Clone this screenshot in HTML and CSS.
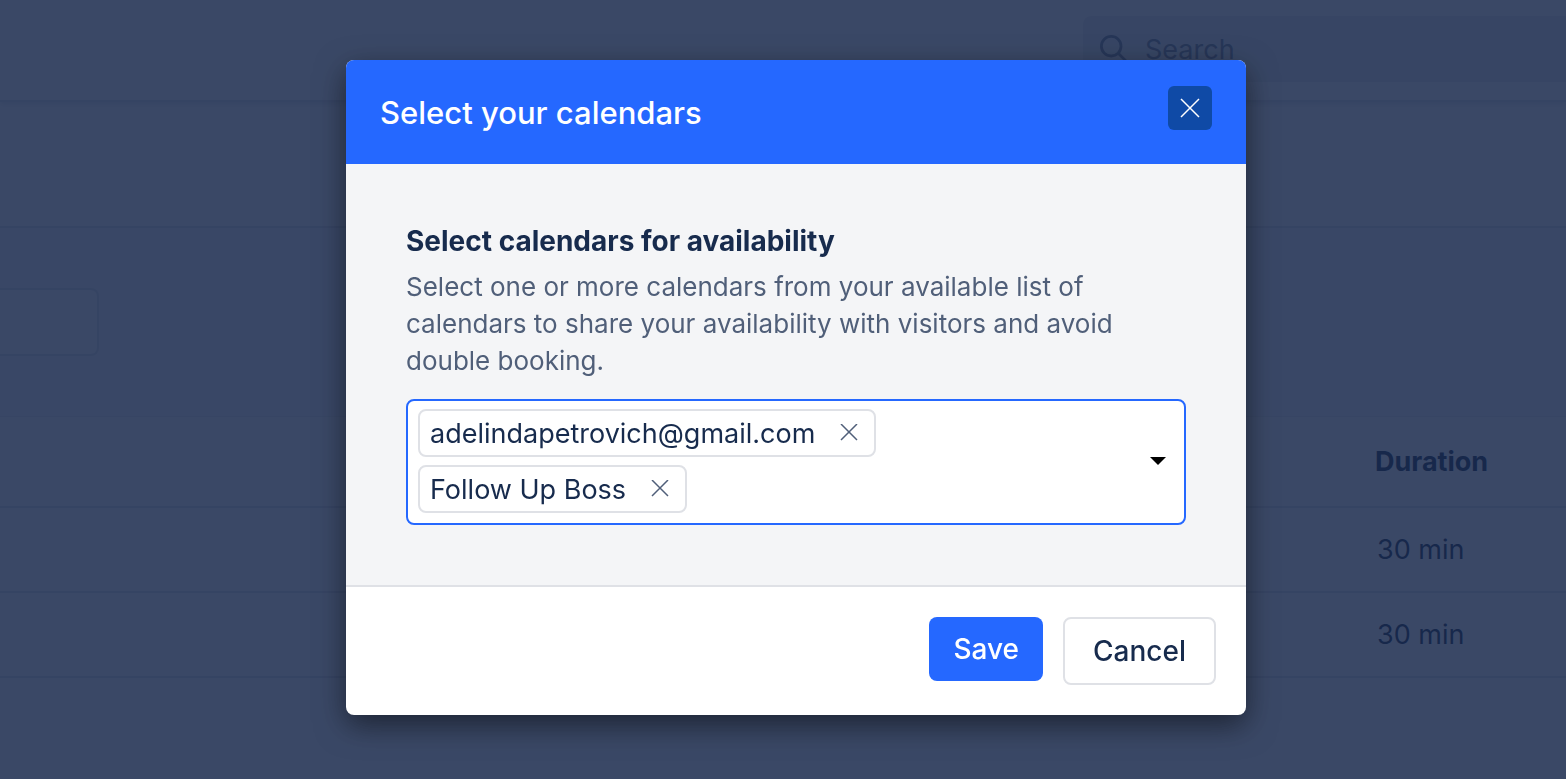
FILE: index.html
```html
<!DOCTYPE html>
<html lang="en">
<head>
<meta charset="utf-8">
<meta name="viewport" content="width=device-width, initial-scale=1">
<title>Select your calendars</title>
<link rel="stylesheet" href="styles.css">
</head>
<body>
<div class="page">
  <header class="topbar">
    <label class="search">
      <svg class="search-icon" viewBox="0 0 30 30" aria-hidden="true"><circle cx="12" cy="12" r="10.500"/><path d="M19.500 19.500 28 28"/></svg>
      <input class="search-input" type="text" placeholder="Search" aria-label="Search">
    </label>
  </header>
  <div class="subheader"></div>
  <div class="toolbar"><button class="filter" type="button" aria-label="Filter"></button></div>
  <table class="list">
    <thead><tr><td></td><th class="duration" scope="col">Duration</th></tr></thead>
    <tbody>
      <tr><td></td><td>30 min</td></tr>
      <tr><td></td><td>30 min</td></tr>
    </tbody>
  </table>
</div>

<div class="overlay">
  <section class="modal" role="dialog" aria-modal="true" aria-labelledby="modal-title">
    <header class="modal-header">
      <h1 class="modal-title" id="modal-title">Select your calendars</h1>
      <button class="close" type="button" aria-label="Close">
        <svg class="close-icon" viewBox="0 0 20 20" aria-hidden="true"><path d="M1 1 19 19M19 1 1 19"/></svg>
      </button>
    </header>
    <div class="modal-body">
      <h2 class="heading" id="field-label">Select calendars for availability</h2>
      <p class="description">Select one or more calendars from your available list of calendars to share your availability with visitors and avoid double booking.</p>
      <div class="picker" role="group" aria-labelledby="field-label">
        <div class="chips">
          <span class="chip">adelindapetrovich@gmail.com
            <button class="chip-remove" type="button" aria-label="Remove adelindapetrovich@gmail.com"><svg class="chip-icon" viewBox="0 0 18 18" aria-hidden="true"><path d="M1 0 17 16M17 0 1 16"/></svg></button>
          </span>
          <span class="chip">Follow Up Boss
            <button class="chip-remove" type="button" aria-label="Remove Follow Up Boss"><svg class="chip-icon" viewBox="0 0 18 18" aria-hidden="true"><path d="M1 0 17 16M17 0 1 16"/></svg></button>
          </span>
        </div>
        <button class="toggle" type="button" aria-label="Show calendars">
          <svg class="caret" viewBox="0 0 16 8" aria-hidden="true"><path d="M0 0H16L8 8Z"/></svg>
        </button>
      </div>
    </div>
    <footer class="modal-footer">
      <button class="button button-primary" type="button">Save</button>
      <button class="button button-secondary" type="button">Cancel</button>
    </footer>
  </section>
</div>
</body>
</html>
```

FILE: styles.css
```css
* {
  box-sizing: border-box;
}

body {
  margin: 0;
  min-height: 100vh;
  background: #fff;
  color: #172b4d;
  font-family: Inter, "Liberation Sans", sans-serif;
  font-size: 27px;
}

button,
input {
  margin: 0;
  padding: 0;
  border: 0;
  background: none;
  color: inherit;
  font: inherit;
}

h1,
h2,
p {
  margin: 0;
}

.topbar {
  display: flex;
  justify-content: flex-end;
  padding: 16px 0 18px;
  border-bottom: 2px solid #dfe1e6;
  box-shadow: 0 2px 6px rgba(23, 43, 77, 0.15);
}

.search {
  display: flex;
  align-items: center;
  gap: 17px;
  width: 483px;
  height: 66px;
  padding-left: 17px;
  border-radius: 8px 0 0 8px;
  background: #ebecf0;
}

.search-icon {
  width: 28px;
  height: 28px;
  fill: none;
  stroke: #7a869a;
  stroke-width: 3;
}

.search-input {
  flex: 1;
  min-width: 0;
}

.search-input::placeholder {
  color: #7a869a;
  opacity: 1;
}

.subheader {
  height: 126px;
  border-bottom: 2px solid #dfe1e6;
}

.toolbar {
  padding: 60px 0;
  background: #f7f8fa;
  border-bottom: 1px solid #ebecf0;
}

.filter {
  display: block;
  width: 99px;
  height: 68px;
  border: 2px solid #dfe1e6;
  border-left: 0;
  border-radius: 0 8px 8px 0;
  background: #fafbfc;
}

.list {
  width: 100%;
  border-spacing: 0;
  table-layout: fixed;
}

.list th,
.list td {
  height: 85px;
  padding: 0 0 0 2px;
  border-bottom: 2px solid #dfe1e6;
  text-align: left;
}

.list thead td,
.list .duration {
  height: 91px;
}

.list .duration {
  width: 191px;
  padding: 0;
  font-weight: 700;
}

.overlay {
  position: fixed;
  inset: 0;
  display: flex;
  justify-content: center;
  align-items: flex-start;
  padding: 60px 0 60px 26px;
  overflow: auto;
  background: rgba(23, 40, 75, 0.85);
}

.modal {
  width: 900px;
  max-width: 100%;
  border-radius: 8px;
  overflow: hidden;
  background: #fff;
  box-shadow: 0 10px 30px rgba(0, 0, 0, 0.5);
}

.modal-header {
  display: flex;
  justify-content: space-between;
  align-items: flex-start;
  padding: 26px 34px 24px;
  background: #2568ff;
  color: #fff;
}

.modal-title {
  font-size: 31px;
  font-weight: 500;
  line-height: 54px;
}

.close {
  display: grid;
  place-items: center;
  width: 44px;
  height: 44px;
  border-radius: 6px;
  background: #0f4aa6;
}

.close-icon {
  width: 20px;
  height: 20px;
  fill: none;
  stroke: #fff;
  stroke-width: 1.5;
}

.modal-body {
  padding: 60px;
  background: #f4f5f7;
}

.heading {
  font-size: 28px;
  font-weight: 700;
  line-height: 34px;
}

.description {
  margin: 10px 0 20px;
  color: #505f79;
  font-size: 26px;
  line-height: 37px;
}

.picker {
  display: flex;
  justify-content: space-between;
  align-items: center;
  padding: 8px 10px 10px;
  border: 2px solid #2568ff;
  border-radius: 8px;
  background: #fff;
}

.chips {
  display: flex;
  flex-direction: column;
  align-items: flex-start;
  gap: 8px;
}

.chip {
  display: flex;
  align-items: center;
  gap: 25px;
  height: 48px;
  padding: 0 16px 0 10px;
  border: 2px solid #dfe1e6;
  border-radius: 8px;
}

.chip-remove,
.toggle {
  display: grid;
  place-items: center;
}

.chip-icon {
  width: 18px;
  height: 18px;
  fill: none;
  stroke: #505f79;
  stroke-width: 1.5;
}

.toggle {
  width: 32px;
  height: 32px;
}

.caret {
  width: 16px;
  height: 8px;
  fill: #000;
}

.modal-footer {
  display: flex;
  justify-content: flex-end;
  align-items: flex-start;
  gap: 20px;
  padding: 30px;
  border-top: 2px solid #dfe1e6;
}

.button {
  height: 64px;
  padding: 0 24px;
  border-radius: 8px;
  font-size: 28px;
  font-weight: 500;
}

.button-primary {
  background: #2568ff;
  color: #fff;
}

.button-secondary {
  height: 68px;
  padding: 0 28px;
  border: 2px solid #dfe1e6;
}
```
